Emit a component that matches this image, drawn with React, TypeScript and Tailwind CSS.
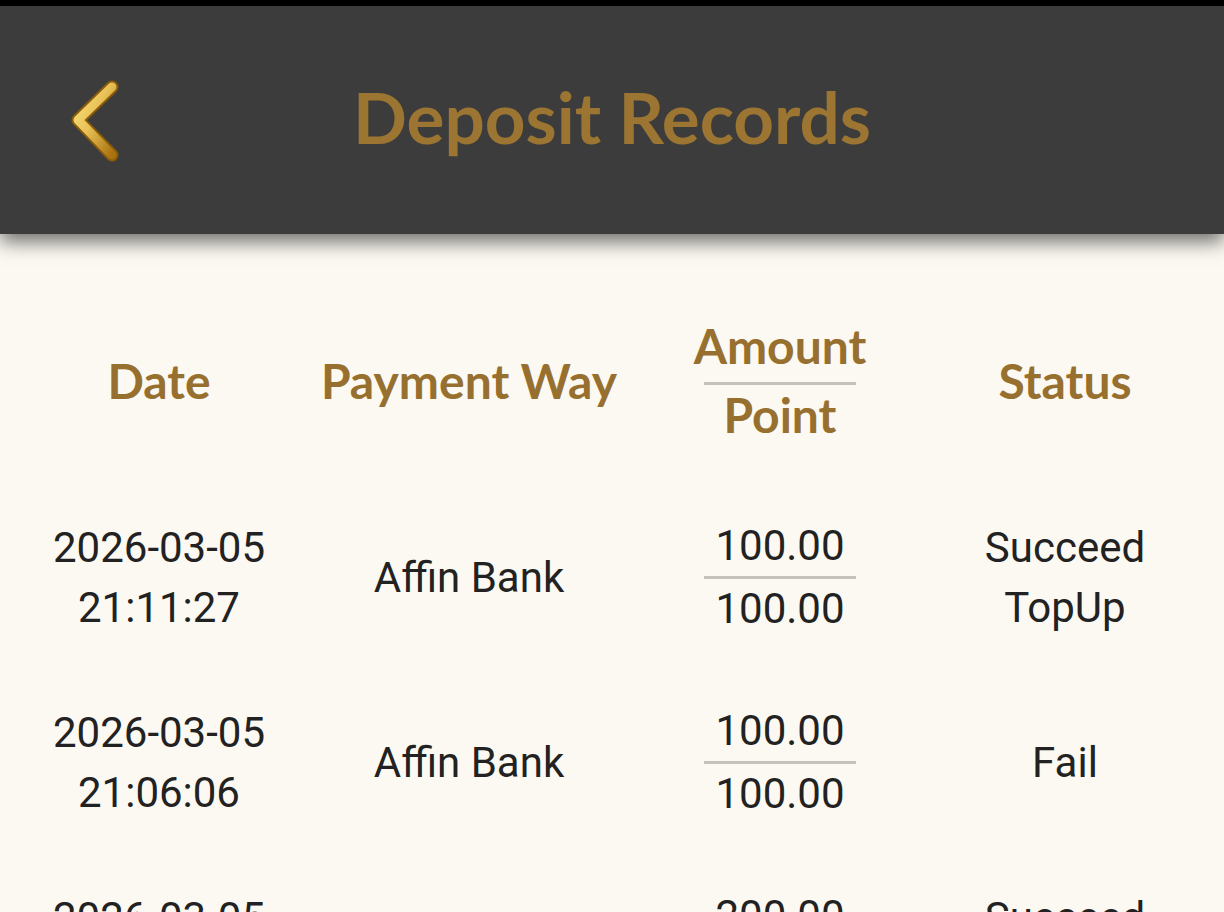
import React from 'react';

type Row = {
  date: string;
  time: string;
  way: string;
  amount: string;
  point: string;
  status: string[];
};

const rows: Row[] = [
  { date: '2026-03-05', time: '21:11:27', way: 'Affin Bank', amount: '100.00', point: '100.00', status: ['Succeed', 'TopUp'] },
  { date: '2026-03-05', time: '21:06:06', way: 'Affin Bank', amount: '100.00', point: '100.00', status: ['Fail'] },
  { date: '2026-03-05', time: '20:58:41', way: 'Affin Bank', amount: '200.00', point: '200.00', status: ['Succeed', 'TopUp'] },
];

const grid = 'grid grid-cols-[318px_302px_320px_250px] text-center';

function BackIcon() {
  return (
    <svg width="60" height="90" viewBox="0 0 60 90" fill="none">
      <defs>
        <linearGradient id="gold" x1="0" y1="0" x2="1" y2="1">
          <stop offset="0%" stopColor="#f6e27a" />
          <stop offset="45%" stopColor="#e9c157" />
          <stop offset="100%" stopColor="#a8720f" />
        </linearGradient>
      </defs>
      <path d="M47 11 L13 44 L47 79" stroke="#8a5b08" strokeWidth="13" strokeLinecap="round" strokeLinejoin="round" />
      <path d="M47 11 L13 44 L47 79" stroke="url(#gold)" strokeWidth="9" strokeLinecap="round" strokeLinejoin="round" />
    </svg>
  );
}

export default function App() {
  return (
    <div className="h-[912px] overflow-hidden bg-[#fcf9f2] font-['Lato',sans-serif]">
      <div className="h-[6px] bg-black" />
      <header className="relative z-10 flex h-[228px] items-center justify-center bg-[#3c3c3c] pb-[8px] shadow-[0_8px_18px_rgba(0,0,0,0.55)]">
        <button className="absolute left-[65px] top-[70px]">
          <BackIcon />
        </button>
        <h1 className="text-[71px] font-bold text-[#9b7531] leading-none">Deposit Records</h1>
      </header>

      <div className={`${grid} items-center pt-[82px] text-[48px] font-bold leading-[60px] text-[#97702f]`}>
        <div>Date</div>
        <div>Payment Way</div>
        <div className="flex flex-col items-center">
          <div>Amount</div>
          <div className="mt-[6px] h-[3px] w-[152px] bg-[#c4c2bd]" />
          <div>Point</div>
        </div>
        <div>Status</div>
      </div>

      <div className="mt-[40px] text-[42px] leading-[60px] text-[#222222] font-['Roboto',sans-serif]">
        {rows.map((r, i) => (
          <div key={i} className={`${grid} items-center py-[31px]`}>
            <div>
              <div>{r.date}</div>
              <div>{r.time}</div>
            </div>
            <div>{r.way}</div>
            <div className="flex flex-col items-center">
              <div>{r.amount}</div>
              <div className="h-[3px] w-[152px] bg-[#c4c2bd]" />
              <div>{r.point}</div>
            </div>
            <div>
              {r.status.map((s) => (
                <div key={s}>{s}</div>
              ))}
            </div>
          </div>
        ))}
      </div>
    </div>
  );
}
